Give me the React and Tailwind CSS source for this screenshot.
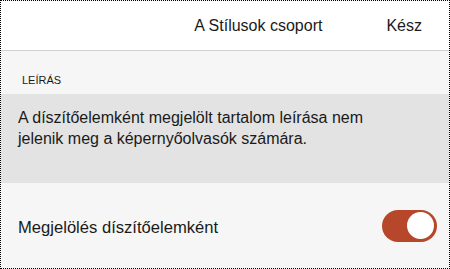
export default function App() {
  return (
    <div className="w-[450px] h-[269px] border border-dotted border-black bg-[#f6f6f6] font-['Liberation_Sans',Arial,sans-serif] text-[#1a1a1a] overflow-hidden flex flex-col">
      {/* Header */}
      <div className="h-[50px] bg-white border-b border-[#d2d2d2] flex items-center shrink-0">
        <div className="flex-1" />
        <div className="text-[16px] pr-[64px]">A Stílusok csoport</div>
        <button className="text-[16px] pr-[27px]">Kész</button>
      </div>

      {/* Leírás */}
      <div className="h-[43px] flex items-end pb-[7px] px-[21px] shrink-0">
        <span className="text-[11px] leading-[13px]">LEÍRÁS</span>
      </div>
      <div className="h-[89px] bg-[#e3e3e3] px-[17px] pt-[13px] text-[16px] leading-[21px] shrink-0">
        A díszítőelemként megjelölt tartalom leírása nem
        <br />
        jelenik meg a képernyőolvasók számára.
      </div>

      {/* Toggle row */}
      <div className="flex-1 flex items-center justify-between pl-[17px] pr-[12px]">
        <span className="text-[16.6px] pt-[6px]">Megjelölés díszítőelemként</span>
        <div className="w-[55px] h-[32px] rounded-full bg-[#b7472a] flex items-center justify-end pr-[3px]">
          <div className="w-[27px] h-[27px] rounded-full bg-white" />
        </div>
      </div>
    </div>
  )
}
